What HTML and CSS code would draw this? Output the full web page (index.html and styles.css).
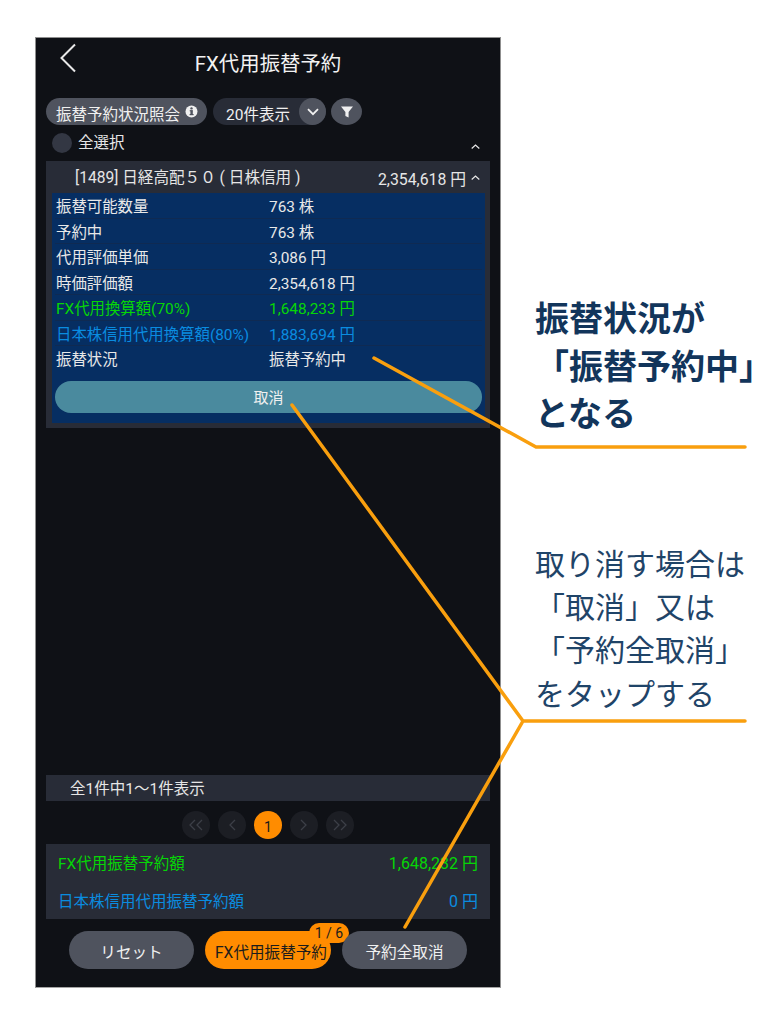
FILE: index.html
```html
<!DOCTYPE html>
<html lang="ja">
<head>
<meta charset="utf-8">
<title>FX代用振替予約</title>
<link rel="stylesheet" href="styles.css">
</head>
<body>
<div class="stage">
  <main class="phone">
    <header class="top">
      <svg class="back" width="18" height="30" viewBox="0 0 18 30"><path d="M16 1.5 2.5 15 16 28.5" fill="none" stroke="#e8e8e8" stroke-width="2"/></svg>
      <h1>FX代用振替予約</h1>
    </header>
    <div class="tools">
      <div class="pill pill-light"><span class="pill-text">振替予約状況照会</span>
        <svg width="13" height="13" viewBox="0 0 13 13"><circle cx="6.5" cy="6.5" r="6" fill="#f0f0f0"/><rect x="5.4" y="5.4" width="2.4" height="4.6" fill="#4f535e"/><rect x="4.6" y="9" width="4" height="1.2" fill="#4f535e"/><rect x="4.7" y="5.2" width="3" height="1.1" fill="#4f535e"/><circle cx="6.5" cy="3.4" r="1.2" fill="#4f535e"/></svg>
      </div>
      <div class="pill pill-dark"><span class="pill-text">20件表示</span>
        <span class="round"><svg width="12" height="8" viewBox="0 0 12 8"><path d="M1 1.2 6 6.2 11 1.2" fill="none" stroke="#f0f0f0" stroke-width="1.8"/></svg></span>
      </div>
      <span class="round"><svg width="12" height="12" viewBox="0 0 12 12"><path d="M0 .5h12L7.6 6v5.5L4.4 10V6z" fill="#f0f0f0"/></svg></span>
    </div>
    <div class="select-all">
      <span class="radio"></span><span class="select-label">全選択</span>
      <svg class="caret" width="9" height="5" viewBox="0 0 9 5"><path d="M.7 4.5 4.5 1l3.8 3.5" fill="none" stroke="#e8e8e8" stroke-width="1.2"/></svg>
    </div>
    <section class="card">
      <div class="card-head">
        <span class="name">[1489] 日経高配５０ ( 日株信用 )</span>
        <span class="amount">2,354,618 円</span>
        <svg width="9" height="5" viewBox="0 0 9 5"><path d="M.7 4.5 4.5 1l3.8 3.5" fill="none" stroke="#e8e8e8" stroke-width="1.2"/></svg>
      </div>
      <div class="card-body">
        <div class="row"><span>振替可能数量</span><span>763 株</span></div>
        <div class="row"><span>予約中</span><span>763 株</span></div>
        <div class="row"><span>代用評価単価</span><span>3,086 円</span></div>
        <div class="row"><span>時価評価額</span><span>2,354,618 円</span></div>
        <div class="row green"><span>FX代用換算額(70%)</span><span>1,648,233 円</span></div>
        <div class="row blue"><span>日本株信用代用換算額(80%)</span><span>1,883,694 円</span></div>
        <div class="row last"><span>振替状況</span><span>振替予約中</span></div>
        <div class="cancel">取消</div>
      </div>
    </section>
    <div class="spacer"></div>
    <div class="count">全1件中1～1件表示</div>
    <nav class="pager">
      <span class="pg"><svg width="16" height="12" viewBox="0 0 16 12"><path d="M7 1 2 6l5 5M14 1 9 6l5 5" fill="none" stroke="#3c3f47" stroke-width="1.3"/></svg></span>
      <span class="pg"><svg width="8" height="12" viewBox="0 0 8 12"><path d="M7 1 2 6l5 5" fill="none" stroke="#3c3f47" stroke-width="1.3"/></svg></span>
      <span class="pg pg-on">1</span>
      <span class="pg"><svg width="8" height="12" viewBox="0 0 8 12"><path d="m1 1 5 5-5 5" fill="none" stroke="#3c3f47" stroke-width="1.3"/></svg></span>
      <span class="pg"><svg width="16" height="12" viewBox="0 0 16 12"><path d="m2 1 5 5-5 5M9 1l5 5-5 5" fill="none" stroke="#3c3f47" stroke-width="1.3"/></svg></span>
    </nav>
    <div class="summary">
      <div class="sum-row sum-first green"><span>FX代用振替予約額</span><span class="sum-val">1,648,232 円</span></div>
      <div class="sum-row blue"><span>日本株信用代用振替予約額</span><span class="sum-val">0 円</span></div>
    </div>
    <div class="actions">
      <div class="btn">リセット</div>
      <div class="btn btn-primary">FX代用振替予約<span class="badge">1 / 6</span></div>
      <div class="btn">予約全取消</div>
    </div>
  </main>
  <svg class="lines" width="780" height="1024" viewBox="0 0 780 1024">
    <path d="M374 358 536 447H745M292 405 523 721H745M523 721 405 927" fill="none" stroke="#f99f0e" stroke-width="3.5" stroke-linecap="round" stroke-linejoin="round"/>
  </svg>
  <p class="note note-bold">振替状況が<br>「振替予約中」<br>となる</p>
  <p class="note note-thin">取り消す場合は<br>「取消」又は<br>「予約全取消」<br>をタップする</p>
</div>
</body>
</html>
```
FILE: styles.css
```css
* { box-sizing: border-box; }
html, body { margin: 0; padding: 0; background: #fff; }
body { font-family: Roboto, "Noto Sans CJK JP", sans-serif; color: #e6e6e6; }
.stage { position: relative; width: 780px; height: 1024px; padding: 37px 0 0 35px; overflow: hidden; }
.phone { width: 466px; height: 951px; background: #0f1116; border: 1px solid #8f8f8f; border-bottom-color: #a5a5a5; padding: 0 10px 18px; display: flex; flex-direction: column; }
.top { position: relative; height: 60px; flex: none; padding-top: 12px; text-align: center; }
.top h1 { margin: 0; font-size: 20.4px; line-height: 28px; font-weight: 400; color: #f2f2f2; }
.back { position: absolute; left: 13px; top: 5px; }
.tools { display: flex; align-items: center; gap: 6px; height: 27px; flex: none; }
.pill { height: 27px; border-radius: 14px; display: flex; align-items: center; font-size: 15.5px; }
.pill-text { position: relative; top: 1px; }
.pill-light { width: 161px; background: #4f535e; padding-left: 10px; gap: 5px; white-space: nowrap; color: #f0f0f0; }
.pill-dark { width: 113px; background: #282c37; padding-left: 13px; justify-content: space-between; color: #f0f0f0; white-space: nowrap; }
.round { width: 27px; height: 27px; border-radius: 50%; background: #4f535e; display: flex; align-items: center; justify-content: center; flex: none; }
.tools > .round { margin-left: -1px; width: 31px; }
.select-all { display: flex; align-items: center; height: 24px; margin-top: 6px; padding: 0 10px 0 6px; flex: none; font-size: 15.5px; }
.radio { width: 20px; height: 20px; border-radius: 50%; background: #333743; }
.select-label { margin-left: 6px; flex: 1; position: relative; top: -2px; }
.caret { position: relative; top: 3px; }
.card { margin-top: 6px; height: 267px; background: #282c37; padding: 0 5px 5px 6px; flex: none; display: flex; flex-direction: column; }
.card-head { height: 32px; flex: none; display: flex; align-items: center; padding: 0 5px 0 23px; font-size: 15.6px; white-space: nowrap; }
.name { flex: 1; position: relative; top: -1px; }
.amount { font-size: 15.8px; margin-right: 5px; position: relative; top: 1px; }
.card-body { flex: 1; background: #062e62; padding: 0 3px; }
.row { display: grid; grid-template-columns: 213px 1fr; height: 25.5px; align-items: center; padding: 0 0 0 1px; font-size: 15.4px; color: #e8e8e8; border-bottom: 1px solid #0f2a52; white-space: nowrap; }
.row.last { border-bottom: 0; padding-bottom: 2px; }
.green { color: #06d606; }
.blue { color: #0a8ce0; }
.row.green { color: #06d606; }
.row.blue { color: #0a8ce0; }
.cancel { margin: 9px 0 0 0; height: 32px; border-radius: 16px; background: #4a8a9e; display: flex; align-items: center; justify-content: center; font-size: 15px; color: #f0f0f0; }
.spacer { flex: 1; }
.count { height: 26px; flex: none; background: #282c37; padding: 0 0 3px 24px; font-size: 15.5px; display: flex; align-items: center; }
.pager { display: flex; justify-content: center; gap: 7.5px; height: 28px; margin-top: 10px; flex: none; }
.pg { width: 28.5px; height: 28px; border-radius: 50%; background: #1c1e24; display: flex; align-items: center; justify-content: center; font-size: 14px; }
.pg-on { background: #ff8c00; color: #1a1a1a; padding-top: 3px; }
.summary { margin-top: 5px; height: 75px; flex: none; background: #282c37; padding: 0 12px; font-size: 15.5px; }
.sum-row { height: 39px; display: flex; justify-content: space-between; align-items: center; }
.sum-first { height: 36px; }
.sum-val { font-size: 16px; }
.actions { display: flex; justify-content: center; gap: 11px; margin-top: 12px; flex: none; }
.btn { position: relative; width: 125px; height: 38px; border-radius: 19px; background: #4f535e; display: flex; align-items: center; justify-content: center; font-size: 15.6px; color: #f0f0f0; padding-top: 1px; white-space: nowrap; }
.btn-primary { width: 126px; background: #ff8c00; color: #1c1c1c; justify-content: flex-start; padding-left: 10px; }
.badge { position: absolute; right: -18px; top: -8px; width: 40px; height: 20px; border-radius: 10px; background: #ff8c00; color: #1c1c1c; font-size: 14px; text-align: center; line-height: 20px; }
.lines { position: absolute; left: 0; top: 0; pointer-events: none; }
.note { position: absolute; margin: 0; left: 535px; white-space: nowrap; }
.note-bold { top: 296px; font-size: 34px; line-height: 47.5px; font-weight: 700; color: #12355b; }
.note-thin { top: 543px; font-size: 30px; line-height: 43.2px; font-weight: 400; color: #1f4468; }
```
